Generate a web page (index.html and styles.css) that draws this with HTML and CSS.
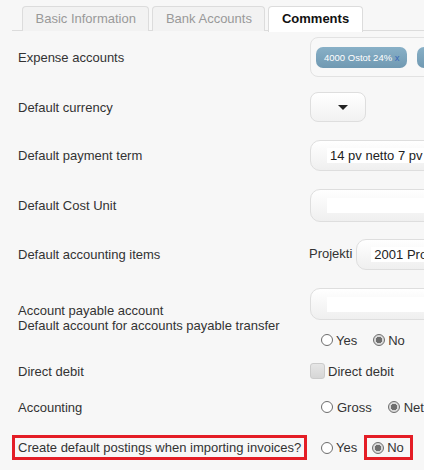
FILE: index.html
```html
<!DOCTYPE html>
<html lang="en">
<head>
    <meta charset="UTF-8">
    <title>Supplier settings</title>
    <link rel="stylesheet" href="styles.css">
</head>
<body>

    <!-- Tabs -->
    <div class="tabs">
        <div class="tab">Basic Information</div>
        <div class="tab">Bank Accounts</div>
        <div class="tab active">Comments</div>
    </div>

    <div class="form">
        <div class="row row-expense">
            <div class="label">Expense accounts</div>
            <div class="control">
                <div class="tagbox">
                    <span class="tag">4000 Ostot 24% <span class="tag-x">x</span></span>
                    <span class="tag">4010 Ostot 14%</span>
                </div>
            </div>
        </div>

        <div class="row row-currency">
            <div class="label">Default currency</div>
            <div class="control">
                <div class="dropbtn"><span class="caret"></span></div>
            </div>
        </div>

        <div class="row row-term">
            <div class="label">Default payment term</div>
            <div class="control">
                <div class="select"><span class="select-text">14 pv netto 7 pv 2%</span></div>
            </div>
        </div>

        <div class="row row-cost">
            <div class="label">Default Cost Unit</div>
            <div class="control">
                <div class="select"><span class="select-text"></span></div>
            </div>
        </div>

        <div class="row row-items">
            <div class="label">Default accounting items</div>
            <div class="control control-items">
                <span class="item-name">Projekti</span>
                <div class="select"><span class="select-text">2001 Projekti</span></div>
            </div>
        </div>

        <div class="row row-payable">
            <div class="label label-multi">Account payable account<br>Default account for accounts payable transfer</div>
            <div class="control control-stack">
                <div class="select"><span class="select-text"></span></div>
                <div class="radios">
                    <span class="radio"></span><span class="opt">Yes</span>
                    <span class="radio checked"></span><span class="opt">No</span>
                </div>
            </div>
        </div>

        <div class="row row-debit">
            <div class="label">Direct debit</div>
            <div class="control">
                <span class="checkbox"></span><span class="check-label">Direct debit</span>
            </div>
        </div>

        <div class="row row-accounting">
            <div class="label">Accounting</div>
            <div class="control radios">
                <span class="radio"></span><span class="opt">Gross</span>
                <span class="radio checked"></span><span class="opt">Net</span>
            </div>
        </div>

        <div class="row row-postings">
            <div class="label label-marked"><span class="marked">Create default postings when importing invoices?</span></div>
            <div class="control radios">
                <span class="radio"></span><span class="opt">Yes</span>
                <span class="marked marked-opt"><span class="radio checked"></span><span class="opt">No</span></span>
            </div>
        </div>
    </div>

</body>
</html>
```

FILE: styles.css
```css
* {
    margin: 0;
    padding: 0;
    box-sizing: border-box;
}

html, body {
    width: 424px;
    height: 470px;
    overflow: hidden;
    background-color: #f7f7f7;
    font-family: "Liberation Sans", Arial, sans-serif;
    font-size: 13px;
    color: #333;
}

/* Tabs */
.tabs {
    display: flex;
    gap: 3px;
    margin: 6px 0 0 12px;
    padding-left: 10px;
    border-bottom: 1px solid #dcdcdc;
    height: 25px;
    width: 600px;
}

.tab {
    height: 25px;
    padding: 0 12.5px;
    line-height: 24px;
    border: 1px solid #dcdcdc;
    border-bottom: none;
    border-radius: 4px 4px 0 0;
    background-color: #f2f2f2;
    color: #999;
    white-space: nowrap;
}

.tab.active {
    background-color: #fff;
    color: #111;
    font-weight: bold;
    height: 26px;
}

/* Rows */
.form {
    margin-top: 6px;
}

.row {
    display: flex;
    align-items: center;
}

.label {
    width: 310px;
    flex-shrink: 0;
    padding-left: 18px;
    white-space: nowrap;
}

.control {
    display: flex;
    align-items: center;
    align-self: stretch;
    white-space: nowrap;
}

.row-expense { height: 40px; }
.row-currency { height: 30px; margin-top: 15px; }
.row-term { height: 31px; margin-top: 18px; }
.row-cost { height: 33px; margin-top: 18px; }
.row-items { height: 31px; margin-top: 17px; }
.row-payable { align-items: flex-start; margin-top: 18px; }
.row-debit { height: 16px; margin-top: 13px; }
.row-accounting { height: 20px; margin-top: 18px; }
.row-postings { height: 25px; margin-top: 18px; }

/* Tag box */
.tagbox {
    display: flex;
    align-items: center;
    gap: 10px;
    width: 200px;
    height: 40px;
    padding-left: 5px;
    border: 1px solid #e2e2e2;
    border-radius: 8px;
    background-color: #f8f8f8;
}

.tag {
    height: 21px;
    line-height: 21px;
    padding: 0 7px 0 8px;
    border-radius: 7px;
    background: linear-gradient(#88b0c7, #7099b2);
    color: #fff;
    font-size: 9.5px;
    white-space: nowrap;
}

.tag-x {
    color: #3b67b8;
}

/* Dropdown button */
.dropbtn {
    width: 56px;
    height: 30px;
    display: flex;
    align-items: center;
    justify-content: center;
    padding-left: 10px;
    border: 1px solid #dedede;
    border-radius: 8px;
    background: linear-gradient(#fff, #f1f1f1);
}

.caret {
    width: 0;
    height: 0;
    border-left: 5px solid transparent;
    border-right: 5px solid transparent;
    border-top: 5px solid #222;
}

/* Selects */
.select {
    width: 200px;
    height: 100%;
    display: flex;
    align-items: center;
    padding-left: 16px;
    border: 1px solid #dedede;
    border-radius: 10px;
    background: linear-gradient(#fff, #efefef);
}

.select-text {
    display: block;
    flex: 1;
    height: 15px;
    line-height: 15px;
    padding-left: 3px;
    background-color: #fff;
    color: #222;
    white-space: nowrap;
}

.control-items {
    gap: 4px;
}

.item-name {
    margin-left: -1px;
    padding-bottom: 3px;
}

.control-items .select {
    padding-left: 14px;
}

.control-stack {
    flex-direction: column;
    align-items: flex-start;
}

.control-stack .select {
    height: 32px;
    flex-shrink: 0;
}

.control-stack .radios {
    height: 20px;
    margin-top: 10px;
}

.label-multi {
    padding-top: 15px;
    line-height: 15px;
}

/* Radios */
.radios {
    display: flex;
    align-items: center;
    padding-left: 11px;
}

.radio {
    width: 12px;
    height: 12px;
    border: 1px solid #6d6d6d;
    border-radius: 50%;
    background-color: #fff;
    flex-shrink: 0;
}

.radio.checked {
    background: radial-gradient(circle, #6e6e6e 0, #6e6e6e 3px, #d9d9d9 3.5px);
}

.opt {
    margin-left: 3px;
    margin-right: 16px;
}

.row-accounting .opt {
    margin-left: 4px;
}

/* Checkbox */
.checkbox {
    width: 15px;
    height: 16px;
    border: 1px solid #cbcbcb;
    border-radius: 3px;
    background: linear-gradient(#e6e6e6, #d6d6d6);
    flex-shrink: 0;
}

.check-label {
    margin-left: 3px;
}

/* Red highlight */
.label-marked {
    padding-left: 12px;
}

.marked {
    display: inline-flex;
    align-items: center;
    height: 25px;
    padding: 0 3px;
    border: 3px solid #e41e26;
}

.marked-opt {
    margin-left: -9px;
    padding: 0 6px 0 5px;
}

.marked-opt .opt {
    margin-right: 0;
}
```
